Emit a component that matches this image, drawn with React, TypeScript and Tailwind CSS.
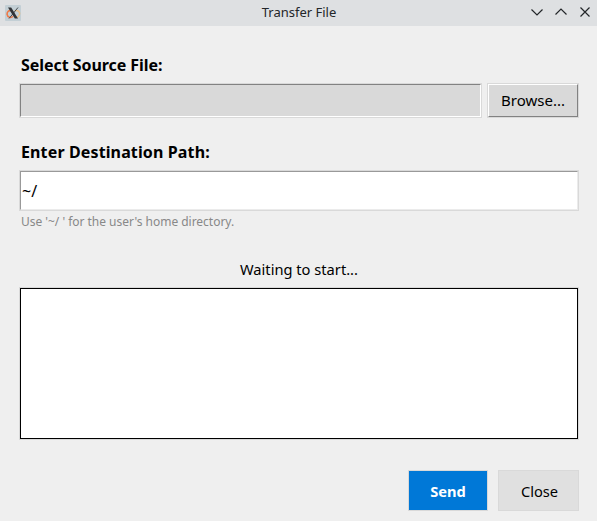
import React from "react";

function TitleBar() {
  return (
    <header className="grid h-[26px] grid-cols-[1fr_auto_1fr] items-center bg-[#dee0e2] text-[#232629]">
      <svg className="ml-[5px] mb-[1px] h-4 w-4" viewBox="0 0 16 16" fill="none">
        <rect width="16" height="16" rx="1" fill="#c3cfd5" />
        <path d="M6.3 5.4C3.5 5.2 1.8 7.2 2.1 9.4C2.5 12.4 6 13.5 8 11.3" stroke="#f07845" strokeWidth="1.6" />
        <path d="M9.5 5.9C12.5 4.8 15 6.3 14.6 9C14.2 12 11.5 13 9.2 11.6" stroke="#ebc08a" strokeWidth="1.5" />
        <path d="M13 2.5L4 13.5" stroke="#454b50" strokeWidth="1" />
        <path d="M3 2.5h3.2l6.8 11H9.8z" fill="#303336" />
      </svg>
      <h1 className="pb-[2px] pl-[1px] text-[13px] leading-[24px]">Transfer File</h1>
      <div className="mr-[4px] mb-[2px] flex gap-2 justify-self-end">
        <svg className="h-4 w-4" viewBox="0 0 16 16" fill="none" stroke="currentColor" strokeWidth="1.2">
          <path d="M2.5 5.5L8 11l5.5-5.5" />
        </svg>
        <svg className="h-4 w-4" viewBox="0 0 16 16" fill="none" stroke="currentColor" strokeWidth="1.2">
          <path d="M2.5 10.5L8 5l5.5 5.5" />
        </svg>
        <svg className="h-4 w-4" viewBox="0 0 16 16" fill="none" stroke="currentColor" strokeWidth="1.2">
          <path d="M3.5 3.5l9 9M12.5 3.5l-9 9" />
        </svg>
      </div>
    </header>
  );
}

export default function App() {
  return (
    <div className="h-[521px] w-[597px] overflow-hidden bg-[#efefef] font-['Noto_Sans',sans-serif] text-black">
      <TitleBar />
      <main className="flex flex-col pl-[19px] pr-[18px] pt-[27px]">
        <h2 className="h-[30px] pl-[2px] text-[16px] leading-[24px] font-bold tracking-[-0.05px]">Select Source File:</h2>
        <div className="flex h-[35px] gap-[5px]">
          <div className="flex-1 border border-[#d9d9d9]">
            <div className="h-full border border-t-[#828282] border-r-white border-b-white border-l-[#828282] bg-[#d9d9d9]" />
          </div>
          <button className="w-[92px] border border-[#d9d9d9]">
            <span className="block h-full border border-t-white border-r-[#828282] border-b-[#828282] border-l-white bg-[#d9d9d9] text-[15px] leading-[31px]">
              Browse...
            </span>
          </button>
        </div>
        <h2 className="mt-[22px] h-[30px] pl-[2px] text-[16px] leading-[24px] font-bold tracking-[0.13px]">Enter Destination Path:</h2>
        <div className="h-[41px] border border-[#d9d9d9]">
          <div className="h-full border border-t-[#999] border-r-[#ebebeb] border-b-[#ebebeb] border-l-[#999] bg-white pl-[1px] text-[16px] leading-[39px]">
            ~/
          </div>
        </div>
        <p className="h-[45px] pl-[2px] text-[12px] leading-[21px] tracking-[-0.02px] text-[#888]">Use '~/ ' for the user's home directory.</p>
        <p className="h-[31px] text-center text-[14.67px] leading-[26px]">Waiting to start...</p>
        <div className="h-[153px] border border-[#d9d9d9]">
          <div className="h-full border border-black bg-white" />
        </div>
        <div className="mt-[30px] flex h-[41px] justify-end gap-[10px] text-[14.67px]">
          <button className="w-[80px] border border-[#d9d9d9] bg-[#0078d7] font-bold text-white">Send</button>
          <button className="w-[81px] border border-[#d9d9d9] bg-[#e0e0e0] pl-[2px]">Close</button>
        </div>
      </main>
    </div>
  );
}
